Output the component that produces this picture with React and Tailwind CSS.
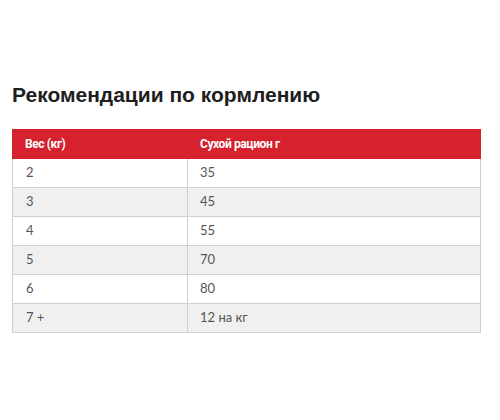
const rows = [
  ["2", "35"],
  ["3", "45"],
  ["4", "55"],
  ["5", "70"],
  ["6", "80"],
  ["7 +", "12 на кг"],
];

export default function App() {
  return (
    <div className="w-[500px] h-[420px] bg-white pt-[81px] pl-[12px]">
      <h2 className="text-[21px] leading-[28px] font-bold text-[#1e1e1e] font-['Liberation_Sans',Arial,sans-serif]">
        Рекомендации по кормлению
      </h2>
      <table className="mt-[20px] w-[469px] border-collapse font-['Lato',sans-serif] text-[13px]">
        <thead>
          <tr className="bg-[#d6212e] text-white h-[29px]">
            <th className="w-[175px] text-left font-bold px-[12px] border border-[#d6212e] font-['Roboto',sans-serif] text-[12px] tracking-[-0.4px]">
              Вес (кг)
            </th>
            <th className="text-left font-bold px-[12px] border border-[#d6212e] font-['Roboto',sans-serif] text-[12px] tracking-[-0.4px]">
              Сухой рацион г
            </th>
          </tr>
        </thead>
        <tbody>
          {rows.map(([w, g], i) => (
            <tr key={i} className={i % 2 ? "bg-[#f0f0f0] h-[29px]" : "bg-white h-[29px]"}>
              <td className="border border-[#cfcfcf] px-[13px] text-[#555]">{w}</td>
              <td className="border border-[#cfcfcf] px-[12px] text-[#555]">{g}</td>
            </tr>
          ))}
        </tbody>
      </table>
    </div>
  );
}
